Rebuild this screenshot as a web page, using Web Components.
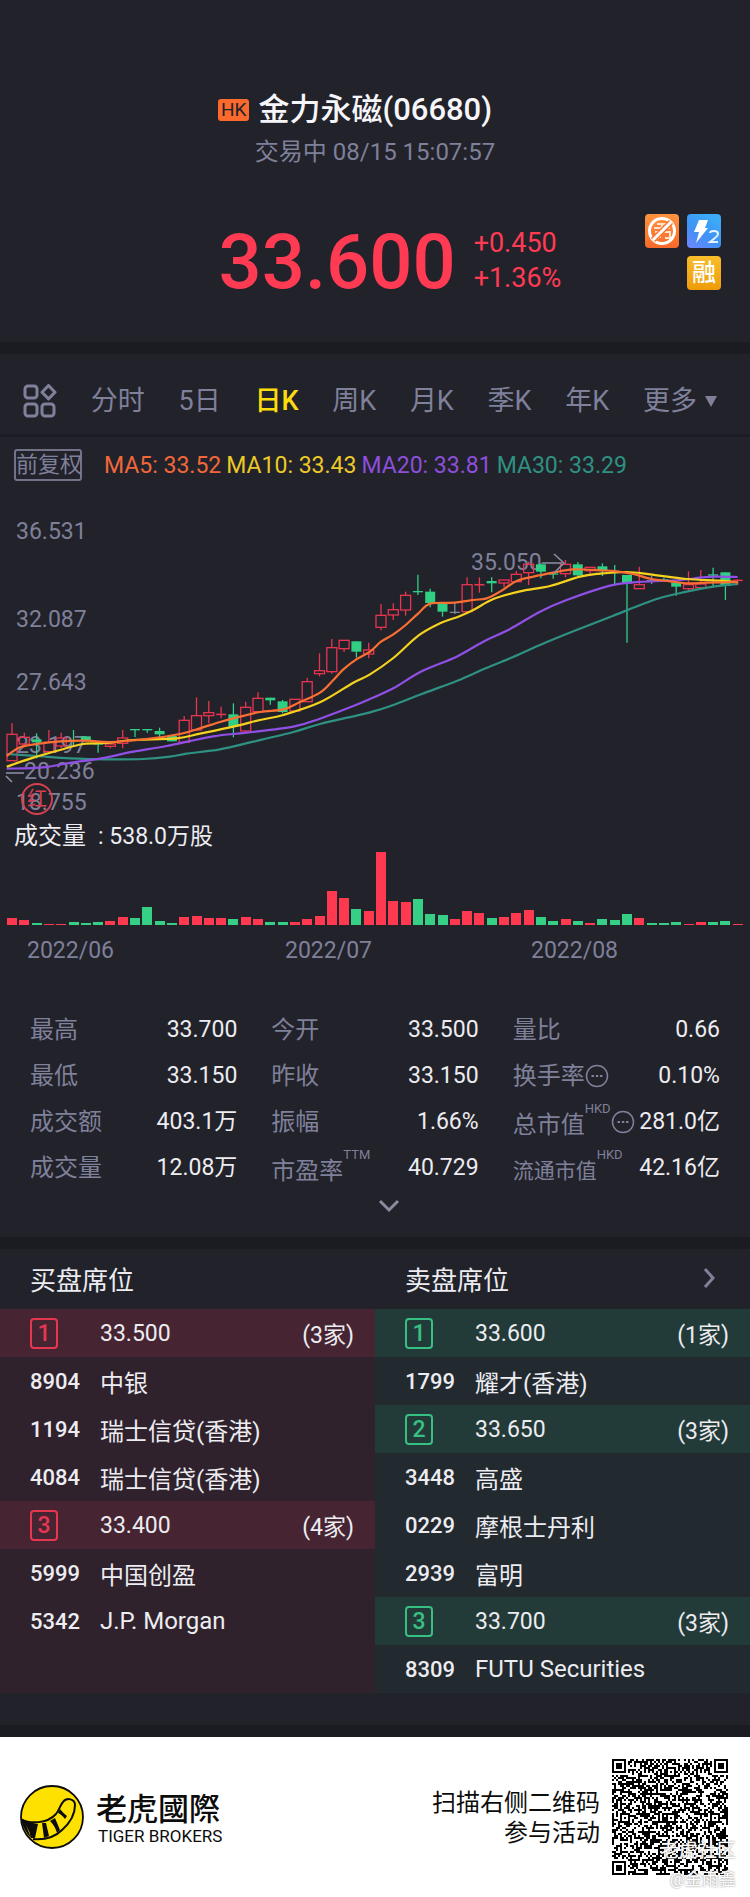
<!DOCTYPE html>
<html lang="zh-CN">
<head>
<meta charset="utf-8">
<meta name="viewport" content="width=device-width, initial-scale=1">
<title>金力永磁(06680)</title>
<style>
  html { background: #1b1b22; }
  body {
    margin: 0;
    --panel: #22222b;
    --muted: #7f8099;
    --text: #ececf1;
    --up: #ff3b54;
    --down: #37d085;
    font-family: Roboto, "Noto Sans CJK SC", sans-serif;
    color: var(--text);
    font-size: 24px;
  }
</style>
</head>
<body>
<quote-page></quote-page>

<script>
const define = (name, html, init) => {
  const tpl = document.createElement('template');
  tpl.innerHTML = html;
  customElements.define(name, class extends HTMLElement {
    connectedCallback() {
      if (this.shadowRoot) return;
      this.attachShadow({ mode: 'open' }).append(tpl.content.cloneNode(true));
      if (init) init(this.shadowRoot, this);
    }
  });
};

/* ---------- header ---------- */
define('quote-header', `
<style>
  :host { display: block; background: var(--panel); padding: 86px 29px 32px; }
  .name { display: flex; align-items: center; justify-content: center; gap: 9px; padding-right: 40px; height: 48px; }
  .mkt { background: #fb6a2c; color: #22222b; font-size: 19px; line-height: 22px; padding: 0 3px; border-radius: 3px; }
  h1 { margin: 0; font-size: 31px; font-weight: 500; line-height: 48px; color: #f6f6fa; }
  .state { margin: 0; text-align: center; font-size: 24px; line-height: 36px; color: var(--muted); }
  .row { display: grid; grid-template-columns: 5fr auto 7fr; margin-top: 44px; color: var(--up); }
  .price { grid-column: 2; font-size: 76px; font-weight: 500; line-height: 96px; }
  .side { display: flex; justify-content: space-between; padding-left: 18px; }
  .chg { font-size: 27px; line-height: 35px; padding-top: 12px; }
  .badges { display: grid; grid-template-columns: 34px 34px; gap: 8px; align-content: start; }
  .badges svg { display: block; width: 34px; height: 34px; }
  .rong { grid-column: 2; width: 34px; height: 34px; border-radius: 4px; background: linear-gradient(#f9bd2c, #ef9b08);
    color: #fff; font-size: 24px; font-weight: 500; line-height: 34px; text-align: center; }
</style>
<div class="name"><span class="mkt">HK</span><h1>金力永磁(06680)</h1></div>
<p class="state">交易中 08/15 15:07:57</p>
<div class="row">
  <div class="price">33.600</div>
  <div class="side">
    <div class="chg"><div>+0.450</div><div>+1.36%</div></div>
    <div class="badges">
      <svg viewBox="0 0 34 34" aria-hidden="true">
        <defs><linearGradient id="o" x2="0" y2="1"><stop stop-color="#ff9440"/><stop offset="1" stop-color="#f8692a"/></linearGradient></defs>
        <rect width="34" height="34" rx="4" fill="url(#o)"/>
        <g stroke="#ffe3cf" stroke-width="2" fill="none"><path d="M12 10h10M9 14h16M17 10v7M10 18h7M8 23h8M19 18h6v6h-5M13 18v7"/></g>
        <circle cx="17" cy="17" r="12.500" fill="none" stroke="#fff" stroke-width="3"/>
        <path d="M26 8 8 26" stroke="#f8762f" stroke-width="6"/><path d="M26 8 8 26" stroke="#fff" stroke-width="3"/>
      </svg>
      <svg viewBox="0 0 34 34" aria-hidden="true">
        <defs><linearGradient id="b" x1="0" y1="1" x2=".6" y2="0"><stop stop-color="#6f86ff"/><stop offset=".5" stop-color="#3f92f5"/><stop offset="1" stop-color="#3cabf8"/></linearGradient></defs>
        <rect width="34" height="34" rx="4" fill="url(#b)"/>
        <path d="M12 6h9l-3 8h3L9 29l3-11H7z" fill="#fff"/>
        <path d="M23 19q0-2 4-2 4 0 4 3 0 2-3 4l-5 4h8" fill="none" stroke="#e8f1ff" stroke-width="2"/>
      </svg>
      <span class="rong">融</span>
    </div>
  </div>
</div>`);

/* ---------- period tabs ---------- */
define('period-tabs', `
<style>
  :host { display: block; background: var(--panel); border-bottom: 3px solid #1c1c24; }
  nav { display: flex; justify-content: space-between; align-items: center; height: 80px; padding: 14px 33px 0 23px; box-sizing: border-box; }
  button { all: unset; display: flex; align-items: center; gap: 8px; font-size: 27px; line-height: 40px; color: var(--muted); cursor: pointer; }
  button[aria-pressed=true] { color: #fcdc0c; font-weight: 500; }
  svg { display: block; }
</style>
<nav>
  <button aria-label="网格"><svg width="34" height="34" viewBox="0 0 34 34" fill="none" stroke="currentColor" stroke-width="3"><rect x="2" y="2" width="12" height="12" rx="3"/><path d="M25.500 1.500 32 8.200l-6.500 6.700L19 8.200z" stroke-linejoin="round"/><rect x="2" y="20" width="12" height="12" rx="3"/><rect x="19" y="20" width="12" height="12" rx="3"/></svg></button>
  <button>分时</button><button>5日</button><button aria-pressed="true">日K</button><button>周K</button><button>月K</button><button>季K</button><button>年K</button>
  <button>更多<svg width="12" height="11" viewBox="0 0 12 11"><path d="M0 0h12L6 11z" fill="currentColor"/></svg></button>
</nav>`);

/* ---------- candlestick chart ---------- */
/* colour, high, body top, body bottom, low: in thirds of a unit below the plot's top */
const CANDLES = `r 670 703 782 782|r 698 712 732 738|g 700 718 727 775|r 690 727 755 755|r 698 714 738 745|g 690 720 722 738|g 709 709 722 724|g 730 730 732 758|r 725 732 739 745|r 690 714 730 745|g 687 687 690 711|g 687 687 690 698|g 683 693 703 712|g 705 708 724 724|r 648 661 727 727|r 592 647 690 690|r 603 638 647 670|r 620 641 643 655|g 610 643 680 712|r 605 622 693 693|r 577 595 635 635|g 593 593 601 614|g 600 604 636 640|r 598 598 633 633|r 533 545 605 605|r 460 512 521 529|r 417 443 515 521|r 421 421 446 456|g 424 424 455 473|r 428 450 462 475|r 312 346 382 391|r 310 329 345 360|r 275 286 330 347|g 224 273 275 285|g 266 275 309 322|g 309 309 335 350|n 310 335 337 342|r 232 254 335 335|r 232 252 254 278|g 232 243 250 277|r 240 240 249 262|r 213 223 245 245|r 185 193 218 255|g 190 193 215 235|g 215 220 222 236|r 180 193 221 232|g 186 193 226 230|r 202 202 212 222|g 190 199 210 228|g 195 214 216 253|g 225 225 250 428|r 200 254 266 266|n 228 240 242 252|g 233 238 241 246|g 246 248 260 287|r 214 254 266 272|r 210 252 263 263|g 203 223 224 262|g 217 217 258 300|r 237 239 245 256`
  .split('|').map(s => s.split(' ')).map(([c, ...v]) => [c, ...v.map(Number)]);
const VOLUMES = [21,15,6,3,3,8,6,10,12,24,21,55,12,6,25,27,21,21,18,24,17,8,8,8,17,27,103,80,48,42,218,72,69,77,33,30,17,43,36,21,23,37,45,25,12,18,12,7,18,15,32,21,6,6,8,3,9,9,12,4];
const VOLUME_DOWN = new Set([2,5,6,7,10,11,12,13,18,21,22,28,33,34,35,39,43,44,46,48,49,50,52,53,54,57,58]);
const LINES = [
  ['#2f9182', '20,762 110,768 210,775 330,778 430,777 510,770 560,761 660,748 760,725 880,696 960,672 1110,637 1180,615 1265,582 1370,543 1450,508 1530,475 1620,435 1720,394 1840,347 1970,297 2060,275 2140,260 2213,252'],
  ['#9050e6', '20,806 130,802 220,787 300,776 400,755 500,738 640,709 740,698 880,680 960,656 1060,618 1110,597 1180,565 1265,514 1370,470 1450,425 1530,387 1620,335 1700,300 1830,257 1900,247 2040,240 2100,233 2150,230 2213,231'],
  ['#f5d21e', '20,800 100,773 180,750 250,732 330,728 400,720 530,715 600,701 700,680 780,660 850,645 960,607 1060,548 1110,523 1180,474 1255,407 1320,370 1375,350 1420,330 1480,297 1560,274 1650,258 1740,230 1800,221 1880,216 1950,223 2060,237 2160,242 2213,247'],
  ['#fb7032', '20,768 60,742 110,732 180,724 260,722 330,726 440,717 540,702 600,685 660,666 700,655 780,636 850,628 900,606 960,578 1000,540 1030,508 1069,478 1110,455 1143,425 1180,403 1217,375 1255,340 1291,311 1365,308 1420,300 1460,295 1500,275 1550,243 1600,230 1660,218 1720,208 1800,211 1850,214 1900,222 1955,237 2010,244 2065,250 2120,248 2213,246'],
];
const smooth = str => {
  const p = str.split(' ').map(s => s.split(',').map((n, i) => n / 3 + (i ? 500 : 0)));
  let d = `M${p[0]}`;
  for (let i = 0; i < p.length - 1; i++) {
    const a = p[i - 1] || p[i], b = p[i], c = p[i + 1], e = p[i + 2] || c;
    d += `C${b[0] + (c[0] - a[0]) / 6},${b[1] + (c[1] - a[1]) / 6} ${c[0] - (e[0] - b[0]) / 6},${c[1] - (e[1] - b[1]) / 6} ${c}`;
  }
  return d;
};
define('k-chart', `
<style>
  :host { display: block; background: var(--panel); padding: 11px 0 8px; }
  .ma { display: flex; align-items: center; gap: 5px; padding-left: 14px; font-size: 23px; line-height: 34px; }
  .ma span { padding-top: 2px; line-height: 32px; }
  .adj { all: unset; box-sizing: border-box; height: 32px; width: 68px; text-align: center; line-height: 28px; font-size: 22px; color: var(--muted); border: 2px solid #727389; border-radius: 3px; margin-right: 17px; cursor: pointer; white-space: nowrap; }
  svg { display: block; width: 100%; height: auto; }
  text { font-size: 23px; fill: var(--muted); }
</style>
<div class="ma">
  <button class="adj">前复权</button>
  <span style="color:#f0683a">MA5: 33.52</span><span style="color:#ebc926">MA10: 33.43</span><span style="color:#8d4fdc">MA20: 33.81</span><span style="color:#2f9182">MA30: 33.29</span>
</div>
<svg viewBox="0 482 750 482" role="img" aria-label="日K线图">
  <g class="axis"><text x="16" y="539">36.531</text><text x="16" y="627">32.087</text><text x="16" y="690">27.643</text><text x="16" y="753">23.197</text><text x="24" y="779">20.236</text><text x="16" y="810">18.755</text><text x="471" y="570">35.050</text></g>
  <g class="plot"></g>
  <g fill="none" stroke="#8f90a8" stroke-width="1.500"><path d="M24 773H6M6 776l6 6M542 563h20M554 554l10 9-10 10"/></g>
  <circle cx="37" cy="799" r="15" fill="none" stroke="#d8404f" stroke-width="2"/>
  <text x="37" y="806" text-anchor="middle" style="font-size:20px;fill:#d8404f">红</text>
  <text x="14" y="844" style="fill:#ececf1;font-size:24px">成交量</text><text x="98" y="844" style="fill:#ececf1">: 538.0万股</text>
  <g class="vol" shape-rendering="crispEdges"></g>
  <text x="27" y="958">2022/06</text><text x="285" y="958">2022/07</text><text x="531" y="958">2022/08</text>
</svg>`, root => {
  const col = { r: '#e83550', g: '#31cf84', n: '#7f8a99' };
  let s = '', v = '';
  CANDLES.forEach(([c, h, t, b, l], i) => {
    const x = 12 + i * 12.3, Y = n => 500 + n / 3, k = col[c];
    const wick = (a, z) => z > a ? `<path d="M${x} ${Y(a)}V${Y(z)}" stroke="${k}" stroke-width="1.300"/>` : '';
    if (c === 'r') {
      s += wick(h, t) + wick(b, l);
      s += b - t > 6 ? `<rect x="${x - 5}" y="${Y(t)}" width="10" height="${(b - t) / 3}" fill="none" stroke="${k}" stroke-width="1.300"/>`
                     : `<rect x="${x - 5}" y="${Y(t)}" width="10" height="1.500" fill="${k}"/>`;
    } else s += wick(h, l) + `<rect x="${x - 5}" y="${Y(t)}" width="10" height="${Math.max(1.3, (b - t) / 3)}" fill="${k}"/>`;
    const vh = VOLUMES[i] / 3;
    v += `<rect x="${x - 5}" y="${925 - vh}" width="10" height="${vh}" fill="${VOLUME_DOWN.has(i) ? '#37cf85' : '#ff3950'}"/>`;
  });
  for (const [c, pts] of LINES) s += `<path d="${smooth(pts)}" fill="none" stroke="${c}" stroke-width="2.200"/>`;
  root.querySelector('.plot').innerHTML = s;
  root.querySelector('.vol').innerHTML = v;
});

/* ---------- key figures ---------- */
define('stat-item', `
<style>
  :host { display: flex; justify-content: space-between; align-items: center; height: 46px; white-space: nowrap; }
  .l { display: flex; align-items: center; color: var(--muted); font-size: 24px; line-height: 36px; }
  :host([small]) .l { font-size: 21px; }
  :host([unit]) .name { padding-top: 6px; }
  .u { font-size: 13px; line-height: 16px; align-self: flex-start; }
  .u:empty, svg { display: none; }
  :host([info]) svg { display: block; }
  .v { font-size: 23px; line-height: 36px; color: var(--text); }
</style>
<div class="l"><span class="name"></span><span class="u"></span>
<svg width="24" height="24" viewBox="0 0 24 24" fill="none" stroke="currentColor" stroke-width="1.500"><circle cx="12" cy="12" r="10.500"/><path d="M6.500 12h2.500M10.800 12h2.500M15 12h2.500" stroke-width="2"/></svg></div>
<div class="v"><slot></slot></div>`, (root, host) => {
  root.querySelector('.name').textContent = host.getAttribute('label');
  root.querySelector('.u').textContent = host.getAttribute('unit') || '';
});
define('key-stats', `
<style>
  :host { display: block; background: var(--panel); padding: 35px 30px 0; }
  .g { display: grid; grid-template-columns: repeat(3, 1fr); column-gap: 34px; }
  button { all: unset; display: block; box-sizing: border-box; width: 100%; padding: 6px 0 22px 28px; cursor: pointer; }
  svg { display: block; margin: 0 auto; }
</style>
<div class="g">
  <stat-item label="最高">33.700</stat-item><stat-item label="今开">33.500</stat-item><stat-item label="量比">0.66</stat-item>
  <stat-item label="最低">33.150</stat-item><stat-item label="昨收">33.150</stat-item><stat-item label="换手率" info>0.10%</stat-item>
  <stat-item label="成交额">403.1万</stat-item><stat-item label="振幅">1.66%</stat-item><stat-item label="总市值" unit="HKD" info>281.0亿</stat-item>
  <stat-item label="成交量">12.08万</stat-item><stat-item label="市盈率" unit="TTM">40.729</stat-item><stat-item label="流通市值" unit="HKD" small>42.16亿</stat-item>
</div>
<button aria-label="展开"><svg width="26" height="18" viewBox="0 0 26 18"><path d="M4 4l9 9 9-9" fill="none" stroke="#8a8b9e" stroke-width="3"/></svg></button>`);

/* ---------- broker seats ---------- */
define('price-level', `
<style>
  :host { display: grid; grid-template-columns: 70px 1fr auto; align-items: center; height: 48px; padding: 0 21px 0 30px; background: var(--level); font-size: 23px; }
  b { box-sizing: border-box; width: 28px; height: 31px; border: 2px solid var(--tone); border-radius: 4px; color: var(--tone); font-weight: 500; line-height: 27px; text-align: center; }
</style>
<b></b><span class="p"></span><span class="c"></span>`, (root, host) => {
  root.querySelector('b').textContent = host.getAttribute('rank');
  root.querySelector('.p').textContent = host.getAttribute('price');
  root.querySelector('.c').textContent = `(${host.getAttribute('count')}家)`;
});
define('broker-seat', `
<style>
  :host { display: grid; grid-template-columns: 70px 1fr; align-items: center; height: 48px; padding: 0 21px 0 30px; font-size: 24px; }
  .c { font-size: 22px; font-weight: 500; }
</style>
<span class="c"></span><span><slot></slot></span>`, (root, host) => {
  root.querySelector('.c').textContent = host.getAttribute('code');
});
define('broker-seats', `
<style>
  :host { display: block; background: var(--panel); padding-bottom: 32px; }
  .cols { display: grid; grid-template-columns: 1fr 1fr; }
  h2 { margin: 0; display: flex; justify-content: space-between; align-items: center; height: 60px; padding: 0 32px 2px 30px; box-sizing: border-box; font-size: 26px; font-weight: 400; }
  h2 a { display: block; color: var(--muted); }
  svg { display: block; }
  .buy { background: #2f222c; --level: #472431; --tone: #e63752; }
  .sell { background: #22292f; --level: #233b38; --tone: #37c083; }
</style>
<div class="cols">
  <h2>买盘席位</h2>
  <h2>卖盘席位<a href="#seats" aria-label="更多席位"><svg width="18" height="24" viewBox="0 0 18 24"><path d="M5 3l8 9-8 9" fill="none" stroke="currentColor" stroke-width="3"/></svg></a></h2>
  <div class="buy">
    <price-level rank="1" price="33.500" count="3"></price-level>
    <broker-seat code="8904">中银</broker-seat>
    <broker-seat code="1194">瑞士信贷(香港)</broker-seat>
    <broker-seat code="4084">瑞士信贷(香港)</broker-seat>
    <price-level rank="3" price="33.400" count="4"></price-level>
    <broker-seat code="5999">中国创盈</broker-seat>
    <broker-seat code="5342">J.P. Morgan</broker-seat>
  </div>
  <div class="sell">
    <price-level rank="1" price="33.600" count="1"></price-level>
    <broker-seat code="1799">耀才(香港)</broker-seat>
    <price-level rank="2" price="33.650" count="3"></price-level>
    <broker-seat code="3448">高盛</broker-seat>
    <broker-seat code="0229">摩根士丹利</broker-seat>
    <broker-seat code="2939">富明</broker-seat>
    <price-level rank="3" price="33.700" count="3"></price-level>
    <broker-seat code="8309">FUTU Securities</broker-seat>
  </div>
</div>`);

/* ---------- QR code and footer ---------- */
define('qr-code', `
<style>
  :host { display: block; width: 116px; height: 116px; }
  svg { display: block; width: 100%; height: 100%; }
</style>
<svg viewBox="0 0 58 58" shape-rendering="crispEdges" role="img" aria-label="二维码"><path/></svg>`, root => {
  const N = 58, at = [6, 29, 51];
  let seed = 20220815, d = '';
  const rnd = () => ((seed = (seed * 1103515245 + 12345) % 2147483648) / 2147483648);
  const square = (x, y, cx, cy, rings) => {
    const r = Math.max(Math.abs(x - cx), Math.abs(y - cy));
    return r < rings.length ? rings[r] : null;
  };
  for (let y = 0; y < N; y++) for (let x = 0; x < N; x++) {
    let on = rnd() < 0.53, hit = null;
    for (const [cx, cy] of [[3, 3], [N - 4, 3], [3, N - 4]]) hit ??= square(x, y, cx, cy, [1, 1, 0, 1, 0]);
    if (hit === null) for (const cy of at) for (const cx of at) {
      if ((cx === 6 && cy !== 29) || (cy === 6 && cx !== 29)) continue;
      hit ??= square(x, y, cx, cy, [1, 0, 1]);
    }
    if (hit === null && (x === 6 || y === 6)) hit = (x + y) % 2 ? 0 : 1;
    if (hit ?? on) d += `M${x} ${y}h1v1h-1z`;
  }
  root.querySelector('path').setAttribute('d', d);
});
define('brand-footer', `
<style>
  :host { display: flex; align-items: center; background: #fff; color: #0c0c0c; height: 160px; padding: 0 22px 0 20px; box-sizing: border-box; }
  .logo { display: block; width: 64px; height: 64px; flex: none; }
  .brand { margin-left: 12px; flex: 1; }
  .zh { font: 500 31px/38px "Noto Sans CJK TC", sans-serif; }
  .en { font-size: 17px; line-height: 20px; padding-left: 2px; white-space: nowrap; }
  .tip { margin: 2px 12px 0 0; text-align: right; font-size: 24px; line-height: 30px; }
  .code { position: relative; }
  .wm { position: absolute; right: -8px; top: 78px; font-size: 19px; line-height: 28px; color: #fff; text-align: right; white-space: nowrap; text-shadow: 0 0 2px #777; }
  .wm small { display: block; font-size: 17px; }
</style>
<svg class="logo" viewBox="0 0 64 64" aria-hidden="true">
  <circle cx="32" cy="32" r="31" fill="#ffe100" stroke="#0c0c0c" stroke-width="1.800"/>
  <path d="M1 34C10 39 27 39 36 29c4-5 4-9 7-12 4-5 12-3 12 3 0 9-5 18-13 25-8 8-18 10-29 9" fill="none" stroke="#0c0c0c" stroke-width="2"/>
  <path d="M1 34l8 3 4 1q4 1 5 1l-3 14-4 0q-1-6-5-13l5 13Q3 45 1 34zM22 38h4l3 13-5 2zM30 36l5-3 5 12-3 3q-2-7-7-12zM38 28l2-4q4 5 7 7l-2 3q-4-5-7-6z" fill="#0c0c0c"/>
</svg>
<div class="brand"><div class="zh" lang="zh-TW">老虎國際</div><div class="en">TIGER BROKERS</div></div>
<p class="tip">扫描右侧二维码<br>参与活动</p>
<div class="code"><qr-code></qr-code><div class="wm">老虎社区<small>@金雨鑫</small></div></div>`);

/* ---------- page ---------- */
define('quote-page', `
<style>
  :host { display: flex; flex-direction: column; gap: 12px; background: #1b1b22; }
</style>
<quote-header></quote-header>
<main-panel><period-tabs></period-tabs><k-chart></k-chart><key-stats></key-stats></main-panel>
<broker-seats></broker-seats>
<brand-footer></brand-footer>`);
define('main-panel', `<style>:host { display: block; }</style><slot></slot>`);
</script>
</body>
</html>
